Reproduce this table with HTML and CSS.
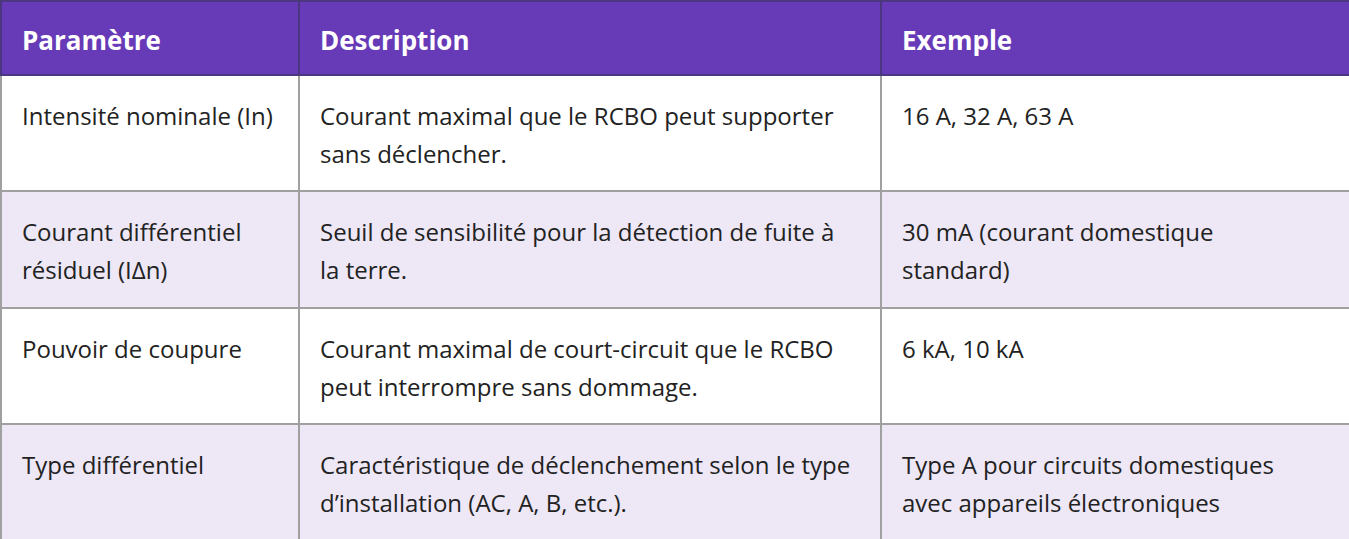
FILE: index.html
```html
<!DOCTYPE html>
<html lang="fr">
<head>
<meta charset="utf-8">
<title>RCBO</title>
<link rel="stylesheet" href="styles.css">
</head>
<body>
<table class="spec-table">
  <colgroup>
    <col class="col-param">
    <col class="col-desc">
    <col class="col-ex">
  </colgroup>
  <thead>
    <tr>
      <th>Paramètre</th>
      <th>Description</th>
      <th>Exemple</th>
    </tr>
  </thead>
  <tbody>
    <tr>
      <td>Intensité nominale (In)</td>
      <td>Courant maximal que le RCBO peut supporter sans déclencher.</td>
      <td>16 A, 32 A, 63 A</td>
    </tr>
    <tr class="alt">
      <td>Courant différentiel résiduel (IΔn)</td>
      <td>Seuil de sensibilité pour la détection de fuite à la terre.</td>
      <td>30 mA (courant domestique standard)</td>
    </tr>
    <tr>
      <td>Pouvoir de coupure</td>
      <td>Courant maximal de court-circuit que le RCBO peut interrompre sans dommage.</td>
      <td>6 kA, 10 kA</td>
    </tr>
    <tr class="alt">
      <td>Type différentiel</td>
      <td>Caractéristique de déclenchement selon le type d’installation (AC, A, B, etc.).</td>
      <td>Type A pour circuits domestiques avec appareils électroniques</td>
    </tr>
  </tbody>
</table>
</body>
</html>
```

FILE: styles.css
```css
html, body {
  margin: 0;
  padding: 0;
  background: #ffffff;
}
body {
  font-family: "Open Sans", "Noto Sans", "DejaVu Sans", sans-serif;
  color: #222222;
}
.spec-table {
  width: 1349px;
  border-collapse: collapse;
  table-layout: fixed;
}
.col-param { width: 298px; }
.col-desc { width: 582px; }
.col-ex { width: 469px; }

.spec-table th {
  background: #673ab7;
  color: #ffffff;
  font-weight: 700;
  font-size: 26px;
  line-height: 38px;
  text-align: left;
  padding: 19px 20px 15px 20px;
  border: 2px solid #4a3780;
}
.spec-table td {
  font-size: 24px;
  line-height: 38px;
  text-align: left;
  vertical-align: top;
  padding: 21px 20px 17px 20px;
  border: 2px solid #a0a0a0;
}
.spec-table td:last-child {
  padding-right: 32px;
}
.spec-table tr.alt td {
  background: #ede7f6;
}
.spec-table tbody tr:nth-child(2) td {
  padding-bottom: 18px;
}
```
